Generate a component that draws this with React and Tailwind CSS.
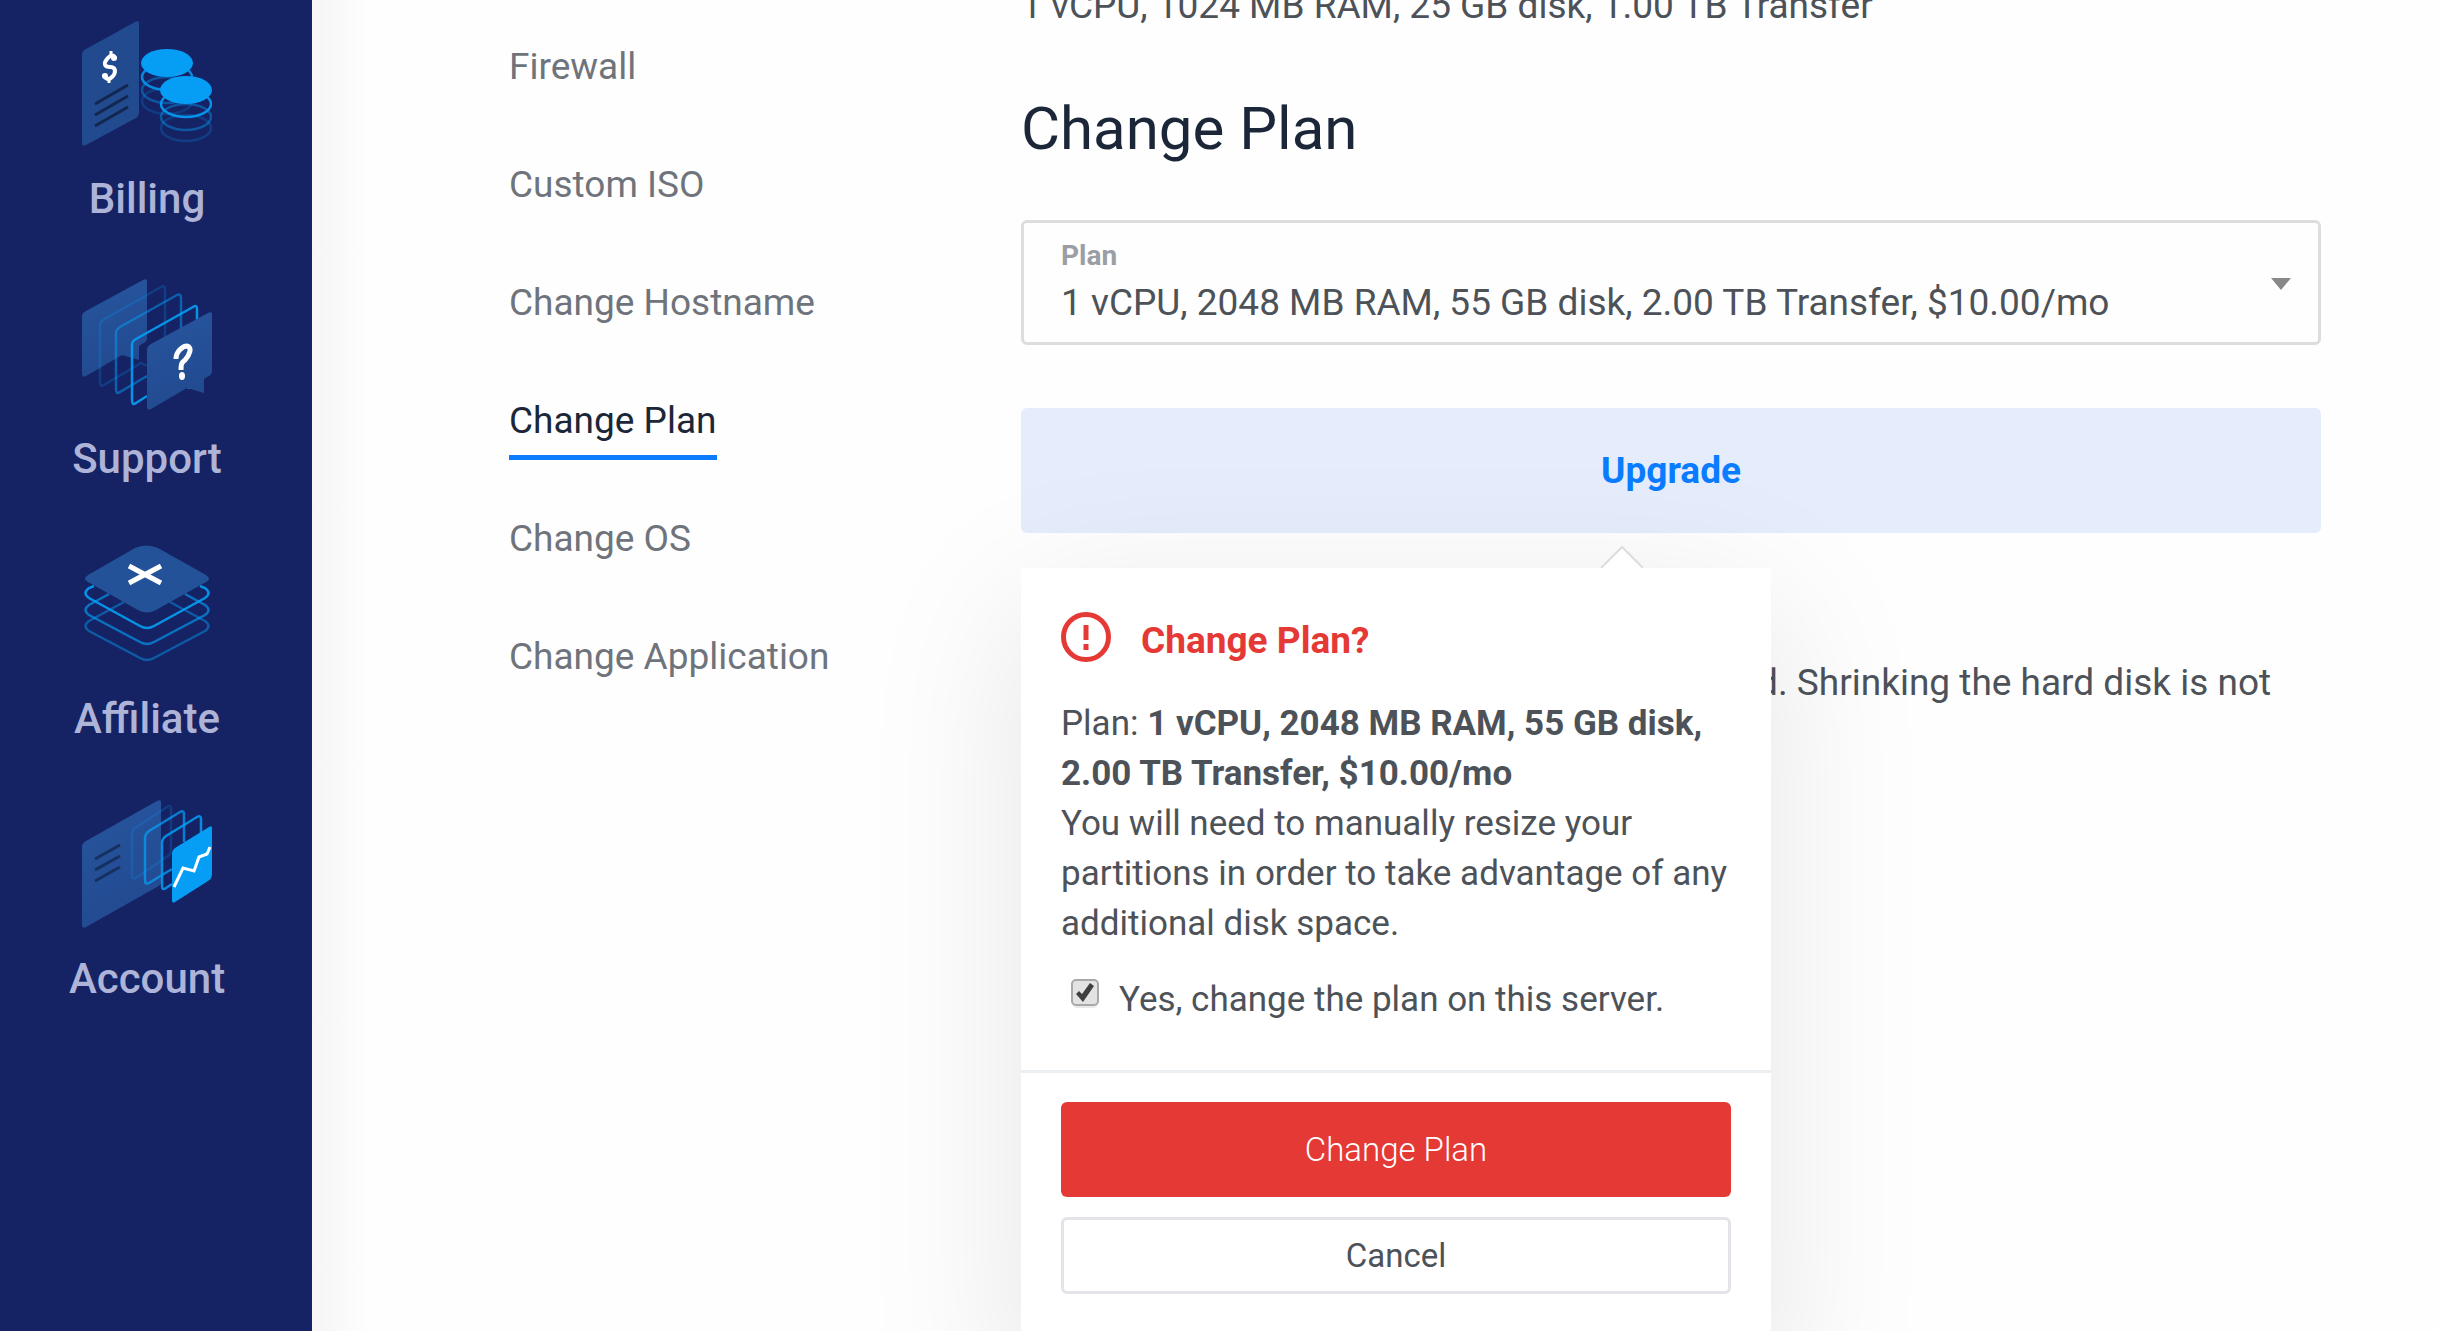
import { useState } from "react";

const NAV = ["Firewall", "Custom ISO", "Change Hostname", "Change Plan", "Change OS", "Change Application"];
const PLAN = "1 vCPU, 2048 MB RAM, 55 GB disk, 2.00 TB Transfer, $10.00/mo";

function BillingIcon() {
  return (
    <svg viewBox="0 0 130 126" className="h-[126px] w-[130px]" aria-hidden="true">
      <path d="M0 33 Q0 30 4 28 L53 1 Q57 -1 57 2 V92 Q57 95 54 97 L4 124 Q0 126 0 122 Z" fill="#224a8f" />
      <path d="M33 38 C32 33 28 34 25 38 C21 43 23 46 28 46 C34 46 34 51 31 55 C27 60 23 58 22 53" fill="none" stroke="#fff" strokeWidth="4" />
      <circle cx="32" cy="37" r="3" fill="#fff" />
      <circle cx="23" cy="55" r="3" fill="#fff" />
      <path d="M29 30 V36 M27 57 V62" stroke="#fff" strokeWidth="3" />
      <g stroke="#12264f" strokeWidth="3">
        <path d="M13 83 L46 64" /><path d="M13 94 L46 75" /><path d="M13 105 L46 86" />
      </g>
      <g fill="none" stroke="#069df5" strokeWidth="2.500">
        <ellipse cx="85" cy="80" rx="25" ry="13" opacity=".2" />
        <ellipse cx="85" cy="69" rx="25" ry="13" opacity=".4" />
        <ellipse cx="85" cy="56" rx="25" ry="13" opacity=".85" />
      </g>
      <ellipse cx="85" cy="42" rx="26" ry="14" fill="#069df5" />
      <g fill="none" stroke="#069df5" strokeWidth="2.500">
        <ellipse cx="104" cy="107" rx="25" ry="13" opacity=".22" />
        <ellipse cx="104" cy="96" rx="25" ry="13" opacity=".42" />
        <ellipse cx="104" cy="83" rx="25" ry="13" opacity=".9" />
      </g>
      <ellipse cx="104" cy="69" rx="26" ry="14" fill="#069df5" />
    </svg>
  );
}

const BUBBLE = "M0 38 Q0 34 4 32 L61 1 Q65 -1 65 2 V59 Q65 63 60 65 L57 67 V81 L40 76 L4 97 Q0 99 0 95 Z";

function SupportIcon() {
  return (
    <svg viewBox="0 0 130 131" className="h-[131px] w-[130px]" aria-hidden="true">
      <defs>
        <linearGradient id="bubble" x1="0" y1="0" x2="0.300" y2="1">
          <stop offset="0" stopColor="#27569f" />
          <stop offset="1" stopColor="#224a90" />
        </linearGradient>
      </defs>
      <path d={BUBBLE} fill="url(#bubble)" />
      <g fill="none" stroke="#069df5" strokeWidth="2.500">
        <path d="M65 87 L59 84 L54 87 L22 106 Q18 108 18 103 V47 Q18 43 21 41 L79 8 Q83 6 83 10 V60" opacity=".22" />
        <path d="M65 97 L38 113 Q34 116 34 110 V55 Q34 50 38 48 L95 16 Q99 14 99 19 V52" opacity=".5" />
        <path d="M65 117 L54 124 Q50 127 50 121 V66 Q50 62 54 60 L111 28 Q115 25 115 30 V44" opacity=".9" />
        <path d="M107 110 V104" />
      </g>
      <path d={BUBBLE} transform="translate(65 33)" fill="url(#bubble)" />
      <path d="M94 80 C94 72 101 67 105 67 C111 68 107 77 103 81 C99 84 99 86 99 91" fill="none" stroke="#fff" strokeWidth="5" />
      <ellipse cx="100" cy="97" rx="3" ry="4" fill="#fff" />
    </svg>
  );
}

function AffiliateIcon() {
  return (
    <svg viewBox="0 0 130 118" className="h-[118px] w-[130px]" aria-hidden="true">
      <g fill="none" stroke="#069df5" strokeWidth="2.500">
        <path d="M42 57 L7 76 Q0 81 7 86 L58 113 Q65 117 72 113 L123 86 Q130 81 123 76 L88 57" opacity=".45" />
        <path d="M27 49 L7 60 Q0 65 7 70 L58 97 Q65 101 72 97 L123 70 Q130 65 123 60 L103 49" opacity=".65" />
        <path d="M12 41 L7 43 Q0 48 7 53 L58 81 Q65 85 72 81 L123 53 Q130 48 123 43 L118 41" opacity=".9" />
      </g>
      <path d="M53 3 Q64 -2 76 3 L124 30 Q130 34 124 37 L74 65 Q65 70 56 65 L6 37 Q0 34 6 30 Z" fill="#245298" />
      <path d="M47 21 L79 38 M79 21 L47 38" stroke="#fff" strokeWidth="5" />
    </svg>
  );
}

function AccountIcon() {
  return (
    <svg viewBox="0 0 130 128" className="h-[128px] w-[130px]" aria-hidden="true">
      <defs>
        <linearGradient id="panel" x1="0" y1="0" x2="0.300" y2="1">
          <stop offset="0" stopColor="#27569f" />
          <stop offset="1" stopColor="#224a90" />
        </linearGradient>
      </defs>
      <path d="M0 47 Q0 43 4 41 L75 1 Q79 -1 79 2 V82 Q79 85 75 87 L4 127 Q0 129 0 125 Z" fill="url(#panel)" />
      <g stroke="#16305f" strokeWidth="3">
        <path d="M13 59 L38 45" /><path d="M13 70 L38 56" /><path d="M13 81 L38 67" />
      </g>
      <g fill="none" stroke="#069df5" strokeWidth="2.500">
        <path d="M50 34 Q50 30 53 28 L85 7 Q89 4 89 9 V51 Q89 54 86 56 L54 78 Q50 80 50 75 Z" opacity=".2" />
        <path d="M102 42 V14 Q102 10 98 12 L67 31 Q63 34 63 38 V80 Q63 85 67 83 L90 69" opacity=".75" />
        <path d="M119 34 V19 Q119 15 115 17 L84 36 Q80 39 80 43 V86 Q80 91 84 88 L90 84" opacity=".85" />
      </g>
      <path d="M90 53 Q90 50 93 48 L127 27 Q130 25 130 28 V74 Q130 79 126 81 L93 102 Q90 104 90 100 Z" fill="#069df5" />
      <path d="M92 87 L101 68 L112 71 L117 57 L125 54 L128 47" fill="none" stroke="#fff" strokeWidth="3" />
    </svg>
  );
}

const SIDEBAR = [
  ["Billing", BillingIcon],
  ["Support", SupportIcon],
  ["Affiliate", AffiliateIcon],
  ["Account", AccountIcon],
];

function Sidebar() {
  return (
    <aside className="w-[312px] shrink-0 bg-[#152364] pr-[18px]">
      <nav className="flex flex-col">
        {SIDEBAR.map(([label, Icon]) => (
          <a key={label} href="#" className="flex h-[260px] flex-col items-center gap-1.5 text-[42px] leading-[50px] font-medium text-[#adb4d8]">
            <span className="flex h-[168px] items-center justify-center"><Icon /></span>
            {label}
          </a>
        ))}
      </nav>
    </aside>
  );
}

function ConfirmPopover({ onClose }) {
  const [agreed, setAgreed] = useState(true);
  return (
    <div role="dialog" aria-labelledby="confirm-title" className="absolute top-full left-0 mt-[35px] w-[750px] bg-white pb-20 text-[35px] leading-[50px] text-[#4d5259] shadow-[0_40px_150px_rgba(0,0,0,0.1)]">
      <svg viewBox="0 0 44 22" className="absolute bottom-full left-[579px] h-[22px] w-[44px]" aria-hidden="true">
        <path d="M0 22 L22 0 L44 22 Z" fill="#fff" />
        <path d="M1 22 L22 1 L43 22" fill="none" stroke="#dcdddf" strokeWidth="2" />
      </svg>
      <div className="px-10 pt-11 pb-[45px]">
        <h3 id="confirm-title" className="flex items-start gap-[30px] text-[37px] leading-[58px] font-bold text-[#e53935]">
          <svg viewBox="0 0 50 50" className="h-[50px] w-[50px]" fill="none" stroke="currentColor" aria-hidden="true">
            <circle cx="25" cy="25" r="22.500" strokeWidth="5" />
            <path d="M25 13 V28 M25 32 V38" strokeWidth="5" />
          </svg>
          Change Plan?
        </h3>
        <p className="mt-[29px]">
          Plan: <strong className="font-bold">{PLAN}</strong>
          <br />
          You will need to manually resize your partitions in order to take advantage of any additional disk space.
        </p>
        <label className="mt-[26px] flex gap-[20px] pl-[10px]">
          <input type="checkbox" checked={agreed} onChange={(e) => setAgreed(e.target.checked)} className="peer sr-only" />
          <svg viewBox="0 0 28 30" className="mt-[4px] h-[30px] w-[28px]" aria-hidden="true">
            <rect x="1" y="3" width="26" height="26" rx="5" fill="#e9e9e9" />
            <rect x="1" y="1" width="26" height="25" rx="4" fill="#e3e3e3" stroke="#a9a9a9" strokeWidth="2" />
            {agreed && <path d="M5 15 L8 12 L11 15 L19 4 L23 7 L12 23 Z" fill="#3f3f3f" />}
          </svg>
          Yes, change the plan on this server.
        </label>
      </div>
      <div className="flex flex-col gap-5 border-t-3 border-[#eceff2] px-10 pt-[29px]">
        <button type="button" className="h-[95px] rounded-md bg-[#e53935] text-[33px] font-light text-white">Change Plan</button>
        <button type="button" onClick={onClose} className="h-[77px] rounded-md border-3 border-[#e3e4e9] bg-white text-[33px]">Cancel</button>
      </div>
    </div>
  );
}

export default function App() {
  const [open, setOpen] = useState(true);
  return (
    <div className="flex h-screen overflow-hidden bg-[#fefefe] font-[Roboto,sans-serif] text-[37px] leading-[54px] text-[#4d5259]">
      <Sidebar />
      <main className="flex min-w-0 flex-1 bg-linear-to-r from-[#f5f5f5] to-[#fefefe] to-[56px] pr-[118px] pl-[197px]">
        <nav className="flex w-[512px] shrink-0 flex-col items-start gap-[52px] pt-[40px]">
          {NAV.map((item) => (
            <a
              key={item}
              href="#"
              className={
                item === "Change Plan"
                  ? "h-[66px] border-b-5 border-[#0a7cff] text-[#1b2638]"
                  : "h-[66px] text-[#6f747c]"
              }
            >
              {item}
            </a>
          ))}
        </nav>
        <section className="min-w-0 flex-1">
          <p className="-mt-[21px]">1 vCPU, 1024 MB RAM, 25 GB disk, 1.00 TB Transfer</p>
          <h2 className="mt-[56px] text-[60px] leading-[80px] text-[#1b2638]">Change Plan</h2>
          <div className="relative mt-[51px]">
            <label htmlFor="plan" className="absolute top-[20px] left-10 text-[28px] leading-[32px] font-bold text-[#9b9fa5]">Plan</label>
            <select id="plan" className="h-[125px] w-full appearance-none rounded-md border-3 border-[#dcdddf] bg-transparent pt-[41px] pr-20 pl-[37px]">
              <option>{PLAN}</option>
            </select>
            <svg viewBox="0 0 20 12" className="pointer-events-none absolute top-[58px] right-[30px] h-[12px] w-[20px]" aria-hidden="true">
              <path d="M0 0 H20 L10 12 Z" fill="#888" />
            </svg>
          </div>
          <div className="relative mt-[63px]">
            <button type="button" onClick={() => setOpen(true)} className="h-[125px] w-full rounded-md bg-[#e5ecfc] font-bold text-[#0a7cff]">Upgrade</button>
            {open && <ConfirmPopover onClose={() => setOpen(false)} />}
          </div>
          <p className="mt-[123px]">Note: Downgrades are currently not supported. Shrinking the hard disk is not possible.</p>
        </section>
      </main>
    </div>
  );
}
